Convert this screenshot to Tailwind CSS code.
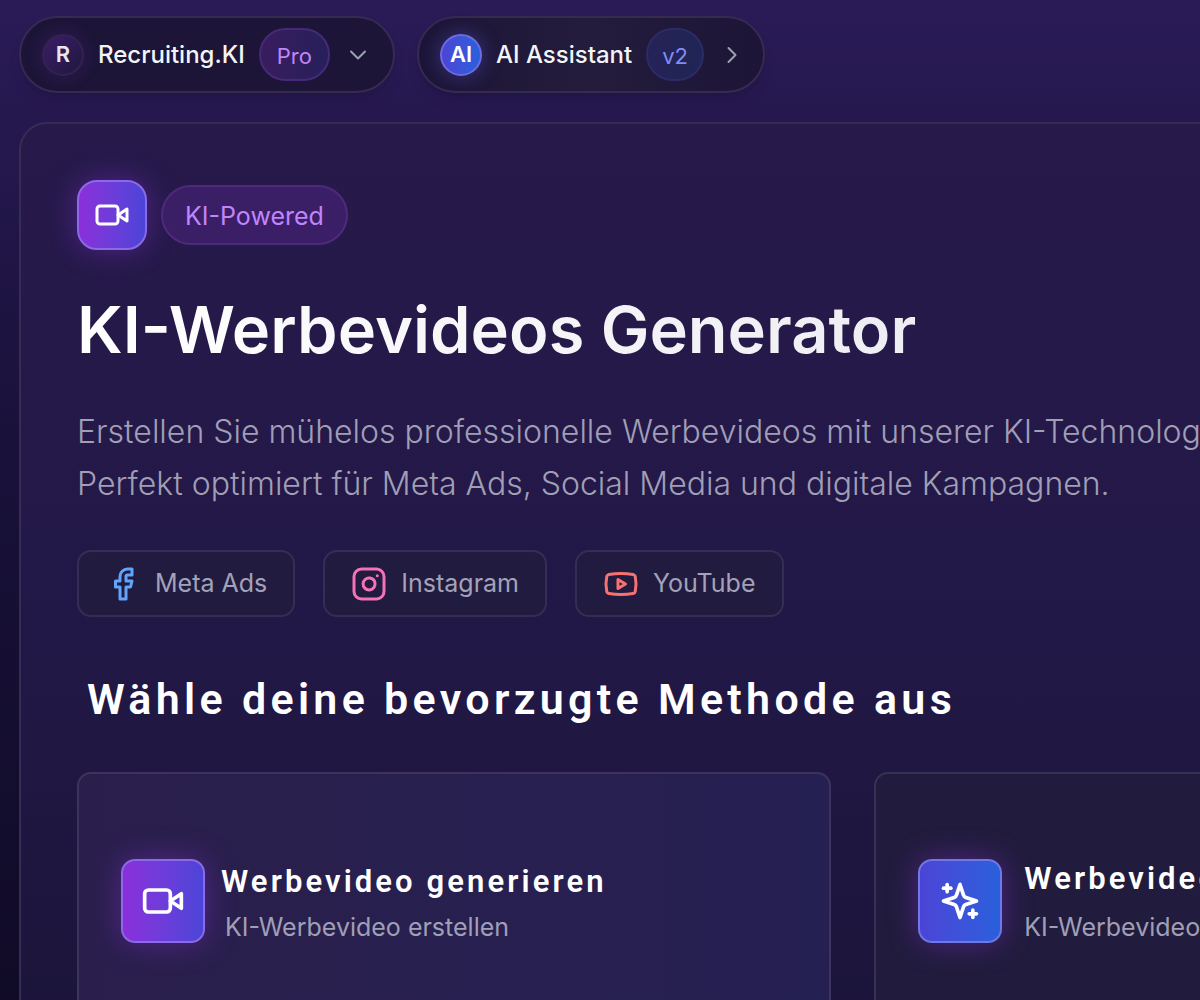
<!DOCTYPE html>
<html lang="de">
<head>
    <meta charset="UTF-8">
    <meta name="viewport" content="width=device-width, initial-scale=1.0">
    <title>KI-Werbevideos Generator</title>
    <script src="https://cdn.jsdelivr.net/npm/@tailwindcss/browser@4"></script>
</head>
<body class="bg-[#0f0a24] font-['Inter',sans-serif] text-white">

    <div class="min-h-screen overflow-hidden bg-linear-to-b from-[#2a1b57] via-[#19113a] via-40% to-[#0f0a24] pl-[19px] pt-4">

        <!-- Top Navigation -->
        <nav class="flex gap-[22px]">
            <button type="button" class="flex h-[77px] items-center gap-3.5 rounded-full border-2 border-[#372a52] bg-[#1c1537] px-[21px] text-[24px] font-medium shadow-lg shadow-black/10">
                <span class="flex size-[42px] items-center justify-center rounded-full border-2 border-[#33244f] bg-linear-to-br from-[#3b1d68] to-[#1f1740] text-[22px] font-semibold text-gray-200 shadow-[0_0_20px] shadow-[#9333ea]/20">R</span>
                <span class="text-gray-100">Recruiting.KI</span>
                <span class="flex h-[53px] items-center rounded-full border-2 border-[#452a78] bg-linear-to-r from-[#3a1c5f] to-[#26205a] px-4 pt-1 text-[22px] font-normal text-[#c084fc]">Pro</span>
                <svg class="size-7 text-[#9ca3af]" viewBox="0 0 24 24" fill="none" stroke="currentColor" stroke-width="1.7" stroke-linecap="round" stroke-linejoin="round"><path d="m6 9 6 6 6-6"/></svg>
            </button>
            <button type="button" class="flex h-[77px] items-center gap-3.5 rounded-full border-2 border-[#372a50] bg-linear-to-r from-[#1c1537] via-[#231c3c] to-[#1c1537] pr-[17px] pl-[21px] text-[24px] font-medium shadow-lg shadow-black/10">
                <span class="flex size-[42px] items-center justify-center rounded-full border-2 border-[#6d6be0] bg-linear-to-r from-[#4b44d6] to-[#2760dc] text-[22px] font-semibold shadow-[0_0_20px] shadow-[#6366f1]/40">AI</span>
                <span class="text-gray-100">AI Assistant</span>
                <span class="flex h-[53px] items-center rounded-full border-2 border-[#2d2b66] bg-linear-to-r from-[#262257] to-[#1f2555] px-3.5 pt-1 text-[22px] font-normal text-[#818cf8]">v2</span>
                <svg class="size-7 text-[#9ca3af]" viewBox="0 0 24 24" fill="none" stroke="currentColor" stroke-width="1.7" stroke-linecap="round" stroke-linejoin="round"><path d="m9 18 6-6-6-6"/></svg>
            </button>
        </nav>

        <!-- Main Panel -->
        <main class="mt-[29px] w-[141.2%] rounded-t-[28px] border-2 border-b-0 border-[#382c56] bg-linear-to-b from-[#271a4b] via-[#221847] via-50% to-[#1b1438] px-14 pt-14 pb-16">

            <div class="flex items-center gap-3.5">
                <div class="flex size-[70px] items-center justify-center rounded-[20px] border-2 border-[#8a6ae6] bg-linear-to-r from-[#8a2fdb] to-[#4b44d8] shadow-[0_0_28px] shadow-[#9333ea]/40">
                    <svg class="size-9" viewBox="0 0 24 24" fill="none" stroke="currentColor" stroke-width="2" stroke-linecap="round" stroke-linejoin="round"><path d="m22 8-6 4 6 4V8Z"/><rect x="2" y="6" width="14" height="12" rx="2"/></svg>
                </div>
                <span class="flex h-[60px] items-center rounded-full border-2 border-[#4f2a7c] bg-[#3a1f66] px-[22px] pt-1 text-[25px] text-[#c084fc]">KI-Powered</span>
            </div>

            <h1 class="mt-10 w-fit bg-linear-to-r from-white to-[#eeedf3] bg-clip-text text-[65px] leading-[80px] font-semibold text-transparent">KI-Werbevideos Generator</h1>

            <p class="mt-9 text-[32px] leading-[52px] font-light text-[#a09fb5]">
                Erstellen Sie mühelos professionelle Werbevideos mit unserer KI-Technologie.<br>
                Perfekt optimiert für Meta Ads, Social Media und digitale Kampagnen.
            </p>

            <!-- Platforms -->
            <div class="mt-10 flex gap-7 text-[25px] text-[#a3a2b8]">
                <div class="flex h-[67px] items-center gap-3.5 rounded-[14px] border-2 border-[#362d54] bg-[#211b3f] px-[26px]">
                    <svg class="size-9 text-[#60a5fa]" viewBox="0 0 24 24" fill="none" stroke="currentColor" stroke-width="2" stroke-linecap="round" stroke-linejoin="round"><path d="M18 2h-3a5 5 0 0 0-5 5v3H7v4h3v8h4v-8h3l1-4h-4V7a1 1 0 0 1 1-1h3z"/></svg>
                    <span>Meta Ads</span>
                </div>
                <div class="flex h-[67px] items-center gap-3.5 rounded-[14px] border-2 border-[#362d54] bg-[#211b3f] px-[26px]">
                    <svg class="size-9 text-[#f472b6]" viewBox="0 0 24 24" fill="none" stroke="currentColor" stroke-width="2" stroke-linecap="round" stroke-linejoin="round"><rect x="2" y="2" width="20" height="20" rx="5"/><path d="M16 11.37A4 4 0 1 1 12.63 8 4 4 0 0 1 16 11.37z"/><path d="M17.5 6.5h.01"/></svg>
                    <span>Instagram</span>
                </div>
                <div class="flex h-[67px] items-center gap-3.5 rounded-[14px] border-2 border-[#362d54] bg-[#211b3f] px-[26px]">
                    <svg class="size-9 text-[#f87171]" viewBox="0 0 24 24" fill="none" stroke="currentColor" stroke-width="2" stroke-linecap="round" stroke-linejoin="round"><path d="M2.5 17a24.12 24.12 0 0 1 0-10 2 2 0 0 1 1.4-1.4 49.56 49.56 0 0 1 16.2 0A2 2 0 0 1 21.5 7a24.12 24.12 0 0 1 0 10 2 2 0 0 1-1.4 1.4 49.55 49.55 0 0 1-16.2 0A2 2 0 0 1 2.5 17"/><path d="m10 15 5-3-5-3z"/></svg>
                    <span>YouTube</span>
                </div>
            </div>

            <h2 class="mt-[54px] pl-2.5 font-['Roboto',sans-serif] text-[43px] leading-[56px] font-semibold tracking-widest">Wähle deine bevorzugte Methode aus</h2>

            <!-- Method Cards -->
            <div class="mt-[45px] grid grid-cols-2 gap-[43px]">
                <a href="#" class="flex items-start gap-4 rounded-[14px] border-2 border-[#3d335e] bg-linear-to-r from-[#2a1f4c] to-[#252052] px-[42px] py-[85px]">
                    <span class="flex size-[84px] shrink-0 items-center justify-center rounded-[14px] border-2 border-[#8a6ae6] bg-linear-to-r from-[#8a2fdb] to-[#4b44d8] shadow-[0_0_30px] shadow-[#9333ea]/40">
                        <svg class="size-11" viewBox="0 0 24 24" fill="none" stroke="currentColor" stroke-width="2" stroke-linecap="round" stroke-linejoin="round"><path d="m22 8-6 4 6 4V8Z"/><rect x="2" y="6" width="14" height="12" rx="2"/></svg>
                    </span>
                    <span>
                        <span class="block font-['Roboto',sans-serif] text-[31px] leading-[46px] font-semibold tracking-widest">Werbevideo generieren</span>
                        <span class="block pl-1 text-[25px] leading-[44px] text-[#a09fb5]">KI-Werbevideo erstellen</span>
                    </span>
                </a>
                <a href="#" class="flex items-start gap-[22px] rounded-[14px] border-2 border-[#393155] bg-[#211c3d] px-[42px] py-[85px]">
                    <span class="flex size-[84px] shrink-0 items-center justify-center rounded-[14px] border-2 border-[#6f78e4] bg-linear-to-r from-[#4b44d6] to-[#2760dc] shadow-[0_0_30px] shadow-[#9333ea]/40">
                        <svg class="size-11" viewBox="0 0 24 24" fill="none" stroke="currentColor" stroke-width="2" stroke-linecap="round" stroke-linejoin="round"><path d="m12 3-1.912 5.813a2 2 0 0 1-1.275 1.275L3 12l5.813 1.912a2 2 0 0 1 1.275 1.275L12 21l1.912-5.813a2 2 0 0 1 1.275-1.275L21 12l-5.813-1.912a2 2 0 0 1-1.275-1.275L12 3Z"/><path d="M5 3v4"/><path d="M19 17v4"/><path d="M3 5h4"/><path d="M17 19h4"/></svg>
                    </span>
                    <span>
                        <span class="mb-1.5 block font-['Roboto',sans-serif] text-[31px] leading-[40px] font-semibold tracking-widest">Werbevideo</span>
                        <span class="block text-[25px] leading-[44px] text-[#a09fb5]">KI-Werbevideo</span>
                    </span>
                </a>
            </div>
        </main>
    </div>

</body>
</html>
